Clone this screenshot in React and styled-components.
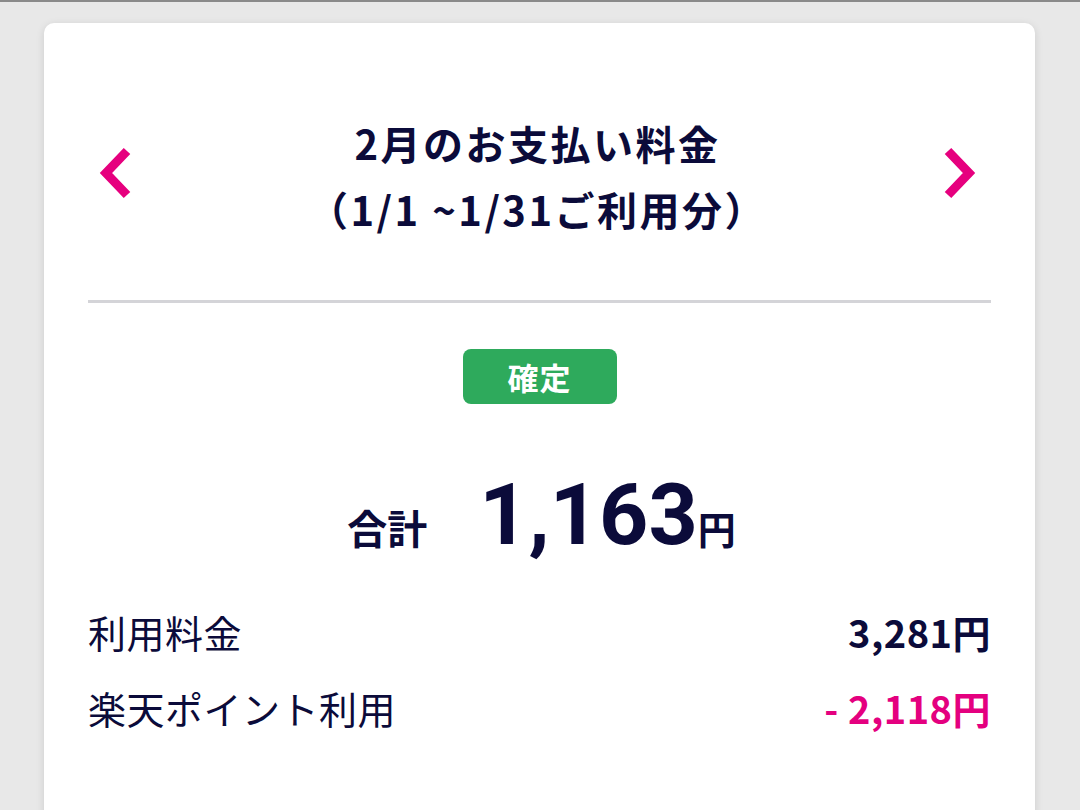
import React from "react";
import styled, { createGlobalStyle } from "styled-components";

const GlobalStyle = createGlobalStyle`
  html, body {
    margin: 0;
    padding: 0;
    background: #e8e8e8;
  }
  body {
    border-top: 2px solid #8a8a8a;
    font-family: "Noto Sans CJK JP", "Noto Sans", sans-serif;
    color: #0b0b3a;
    height: 808px;
    overflow: hidden;
  }
`;

const Page = styled.div`
  padding: 21px 45px 0 44px;
`;

const Card = styled.div`
  background: #ffffff;
  border-radius: 10px;
  box-shadow: 0 2px 8px rgba(0, 0, 0, 0.12);
  padding: 0 44px 80px;
  min-height: 800px;
`;

const Header = styled.div`
  display: flex;
  align-items: center;
  justify-content: space-between;
  padding: 87px 14px 0 10px;
  margin-bottom: 58px;
`;

const Arrow = styled.button`
  border: none;
  background: none;
  padding: 0;
  margin-bottom: 6px;
  width: 34px;
  height: 52px;
  display: flex;
  align-items: center;
  justify-content: center;
  cursor: pointer;
`;

const Title = styled.h2`
  margin: 0;
  font-size: 40px;
  font-weight: 700;
  line-height: 66px;
  letter-spacing: 2.5px;
  text-align: center;
  color: #0b0b3a;
`;

const Divider = styled.hr`
  margin: 0;
  border: none;
  height: 3px;
  background: #d4d4d8;
`;

const BadgeRow = styled.div`
  display: flex;
  justify-content: center;
  padding-top: 46px;
`;

const Badge = styled.span`
  display: inline-flex;
  align-items: center;
  justify-content: center;
  width: 154px;
  height: 55px;
  border-radius: 8px;
  background: #2eaa5c;
  color: #ffffff;
  font-size: 31px;
  font-weight: 700;
  letter-spacing: 1px;
`;

const TotalRow = styled.div`
  display: flex;
  justify-content: center;
  align-items: baseline;
  margin-top: 68px;
  padding-left: 4px;
  line-height: 1;
`;

const TotalLabel = styled.span`
  font-size: 40px;
  font-weight: 700;
  margin-right: 52px;
`;

const TotalAmount = styled.span`
  font-family: Roboto, "Noto Sans", sans-serif;
  font-size: 86px;
  font-weight: 700;
`;

const Yen = styled.span`
  font-size: 38px;
  font-weight: 700;
`;

const List = styled.div`
  display: flex;
  flex-direction: column;
  gap: 26px;
  margin-top: 48px;
`;

const Row = styled.div`
  display: flex;
  justify-content: space-between;
  align-items: center;
  height: 50px;
  font-size: 38px;
  letter-spacing: 0.5px;
`;

const Value = styled.span`
  font-weight: 700;
  color: ${(p) => (p.minus ? "#e4007f" : "#0b0b3a")};
`;

const Chevron = ({ dir }) => (
  <svg width="34" height="52" viewBox="0 0 34 52">
    <path
      d={dir === "left" ? "M29 4 L8 26 L29 48" : "M5 4 L26 26 L5 48"}
      fill="none"
      stroke="#e6007e"
      strokeWidth="9"
    />
  </svg>
);

const App = () => {
  return (
    <Page>
      <GlobalStyle />
      <Card>
        <Header>
          <Arrow aria-label="前月">
            <Chevron dir="left" />
          </Arrow>
          <Title>
            2月のお支払い料金
            <br />
            （1/1 ~1/31ご利用分）
          </Title>
          <Arrow aria-label="次月">
            <Chevron dir="right" />
          </Arrow>
        </Header>
        <Divider />
        <BadgeRow>
          <Badge>確定</Badge>
        </BadgeRow>
        <TotalRow>
          <TotalLabel>合計</TotalLabel>
          <TotalAmount>1,163</TotalAmount>
          <Yen>円</Yen>
        </TotalRow>
        <List>
          <Row>
            <span>利用料金</span>
            <Value>3,281円</Value>
          </Row>
          <Row>
            <span>楽天ポイント利用</span>
            <Value minus>- 2,118円</Value>
          </Row>
        </List>
      </Card>
    </Page>
  );
};

export default App;
